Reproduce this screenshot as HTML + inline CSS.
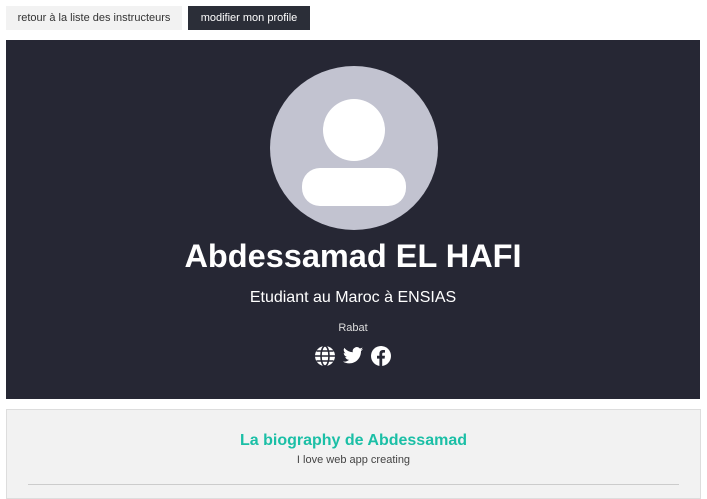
<!DOCTYPE html>
<html><head><meta charset="utf-8"><style>
*{margin:0;padding:0;box-sizing:border-box}
body{width:707px;height:487px;overflow:hidden;background:#fff;font-family:"Liberation Sans",Arial,sans-serif;position:relative}
.b{position:absolute;top:6px;height:24px;font-size:11px;line-height:24px;text-align:center}
.b1{left:6px;width:176px;background:#f2f2f2;color:#333}
.b2{left:188px;width:122px;background:#2b2e38;color:#fff}
.hero{position:absolute;left:6px;top:40px;width:694px;height:359px;background:#262734;color:#fff;text-align:center}
.av{position:absolute;left:264px;top:26px;width:168px;height:164px;border-radius:50%;background:#c2c3d0;overflow:hidden}
.name{position:absolute;top:198px;width:100%;font-size:32.5px;font-weight:bold}
.sub{position:absolute;top:249px;width:100%;font-size:16px}
.city{position:absolute;top:282px;width:100%;font-size:11px;color:#ddd}
.icons{position:absolute;top:305px;left:308px;display:flex;gap:6px}
.bio{position:absolute;left:6px;top:409px;width:695px;height:90px;background:#f2f2f2;border:1px solid #ddd;text-align:center}
.bio h2{margin-top:22px;font-size:16px;color:#1bbfa6}
.bio p{margin-top:4px;font-size:11px;color:#444}
.bio hr{position:absolute;left:21px;right:21px;top:74px;border:0;border-top:1px solid #ccc}
</style></head><body>
<div class="b b1">retour à la liste des instructeurs</div>
<div class="b b2">modifier mon profile</div>
<div class="hero">
<div class="av"><svg width="168" height="164" viewBox="0 0 168 164"><circle cx="84" cy="64" r="31" fill="#fff"/><rect x="32" y="102" width="104" height="38" rx="18" fill="#fff"/></svg></div>
<div class="name">Abdessamad EL HAFI</div>
<div class="sub">Etudiant au Maroc à ENSIAS</div>
<div class="city">Rabat</div>
<div class="icons">
<svg width="22" height="22" viewBox="0 0 22 22"><circle cx="11" cy="11" r="10" fill="#fff"/><g stroke="#262734" stroke-width="1.6" fill="none"><ellipse cx="11" cy="11" rx="4" ry="10"/><line x1="1" y1="11" x2="21" y2="11"/><line x1="2.5" y1="6" x2="19.5" y2="6"/><line x1="2.5" y1="16" x2="19.5" y2="16"/></g></svg>
<svg width="22" height="22" viewBox="0 0 24 24"><path fill="#fff" d="M23 4.5c-.8.4-1.7.6-2.6.7.9-.6 1.6-1.4 2-2.5-.9.5-1.9.9-2.9 1.1A4.5 4.5 0 0 0 11.8 7.9 12.8 12.8 0 0 1 2.5 3.2a4.5 4.5 0 0 0 1.4 6c-.7 0-1.4-.2-2-.6 0 2.2 1.6 4 3.6 4.4-.7.2-1.4.2-2 .1.6 1.8 2.2 3.1 4.2 3.1A9 9 0 0 1 1 18.1 12.8 12.8 0 0 0 7.9 20c8.3 0 12.8-6.9 12.8-12.8v-.6c.9-.6 1.6-1.4 2.3-2.1z"/></svg>
<svg width="22" height="22" viewBox="0 0 22 22"><circle cx="11" cy="11" r="10" fill="#fff"/><path fill="#262734" d="M12.2 21V13.6h2.4l.4-2.8h-2.8V9c0-.8.3-1.4 1.4-1.4H15V5.1c-.3 0-1.1-.1-2.1-.1-2.1 0-3.5 1.3-3.5 3.6v2.2H7v2.8h2.4V21z"/></svg>
</div>
</div>
<div class="bio"><h2>La biography de Abdessamad</h2><p>I love web app creating</p><hr></div>
</body></html>
